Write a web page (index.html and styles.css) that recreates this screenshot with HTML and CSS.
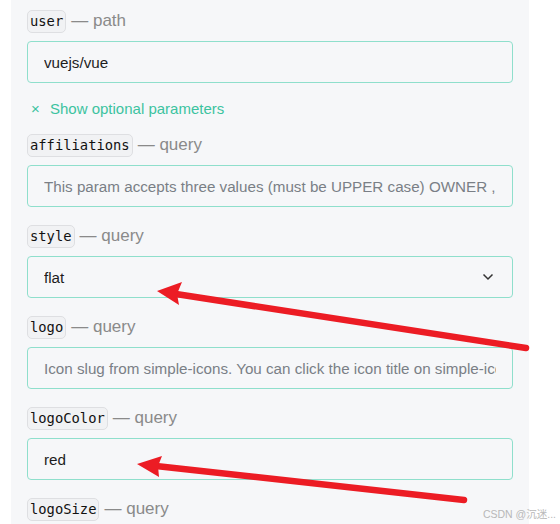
FILE: index.html
```html
<!DOCTYPE html>
<html lang="en">
<head>
<meta charset="utf-8">
<title>Params</title>
<link rel="stylesheet" href="styles.css">
</head>
<body>
<div class="panel">
  <div class="field">
    <div class="label"><code class="name">user</code><span class="kind">— path</span></div>
    <div class="input"><span class="text">vuejs/vue</span></div>
  </div>
  <div class="toggle"><span class="x">×</span>Show optional parameters</div>
  <div class="field">
    <div class="label"><code class="name">affiliations</code><span class="kind">— query</span></div>
    <div class="input placeholder"><span class="text">This param accepts three values (must be UPPER case) OWNER , COLLABORATOR , ORGANIZATION_MEMBER</span></div>
  </div>
  <div class="field">
    <div class="label"><code class="name">style</code><span class="kind">— query</span></div>
    <div class="input select"><span class="text">flat</span>
      <svg class="chev" width="12" height="8" viewBox="0 0 12 8"><polyline points="1.5,1.5 6,6 10.5,1.5" fill="none" stroke="#333" stroke-width="1.5"/></svg>
    </div>
  </div>
  <div class="field">
    <div class="label"><code class="name">logo</code><span class="kind">— query</span></div>
    <div class="input placeholder"><span class="text">Icon slug from simple-icons. You can click the icon title on simple-icons to copy the slug</span></div>
  </div>
  <div class="field">
    <div class="label"><code class="name">logoColor</code><span class="kind">— query</span></div>
    <div class="input"><span class="text">red</span></div>
  </div>
  <div class="field">
    <div class="label"><code class="name">logoSize</code><span class="kind">— query</span></div>
  </div>
</div>
<svg class="arrows" width="560" height="524" viewBox="0 0 560 524">
  <line x1="526" y1="348" x2="176" y2="294" stroke="#ec1c24" stroke-width="6.5" stroke-linecap="round"/>
  <polygon points="157,291 182,282 177,294 179,305" fill="#ec1c24"/>
  <line x1="464" y1="500" x2="156" y2="466" stroke="#ec1c24" stroke-width="6.5" stroke-linecap="round"/>
  <polygon points="137,464 162,456 158,466 159,477" fill="#ec1c24"/>
</svg>
<div class="watermark">CSDN @沉迷...</div>
</body>
</html>
```
FILE: styles.css
```css
html, body {
  margin: 0;
  padding: 0;
  background: #ffffff;
  height: 524px;
  overflow: hidden;
}
body {
  position: relative;
  font-family: "Liberation Sans", Arial, sans-serif;
}
.panel {
  margin-left: 11px;
  width: 518px;
  height: 524px;
  box-sizing: border-box;
  background: #f6f7f9;
  padding: 10px 0 0 16px;
  display: flex;
  flex-direction: column;
  align-items: flex-start;
}
.field {
  margin-bottom: 18px;
  flex: none;
}
.field + .toggle {
  margin-top: -2px;
}
.label {
  display: flex;
  align-items: center;
  height: 22px;
  margin-bottom: 9px;
}
.name {
  font-family: "DejaVu Sans Mono", "Liberation Mono", monospace;
  font-size: 13.8px;
  color: #111;
  background: #f1f2f4;
  border: 1px solid #dedfe2;
  border-radius: 5px;
  padding: 0 2px;
  height: 21px;
  line-height: 21px;
}
.kind {
  font-size: 17px;
  color: #8a8a8a;
  margin-left: 5px;
}
.input {
  width: 486px;
  height: 42px;
  box-sizing: border-box;
  border: 1px solid #8fdfcc;
  border-radius: 4px;
  padding: 0 16px;
  display: flex;
  align-items: center;
  font-size: 15.2px;
  color: #1d1d1d;
}
.text {
  flex: 1;
  min-width: 0;
  white-space: nowrap;
  overflow: hidden;
}
.placeholder {
  color: #7a7f86;
}
.select {
  padding-right: 18px;
}
.chev {
  display: block;
  flex: none;
}
.toggle {
  flex: none;
  margin-bottom: 15px;
  height: 20px;
  line-height: 20px;
  font-size: 15px;
  color: #3cc3a0;
  padding-left: 4px;
}
.x {
  display: inline-block;
  width: 19px;
  font-size: 15px;
}
.arrows {
  position: absolute;
  left: 0;
  top: 0;
  pointer-events: none;
}
.watermark {
  position: absolute;
  right: 4px;
  bottom: 3px;
  font-size: 10.5px;
  color: #b8b8b8;
  font-family: "Liberation Sans", "Noto Sans CJK SC", sans-serif;
}
```
